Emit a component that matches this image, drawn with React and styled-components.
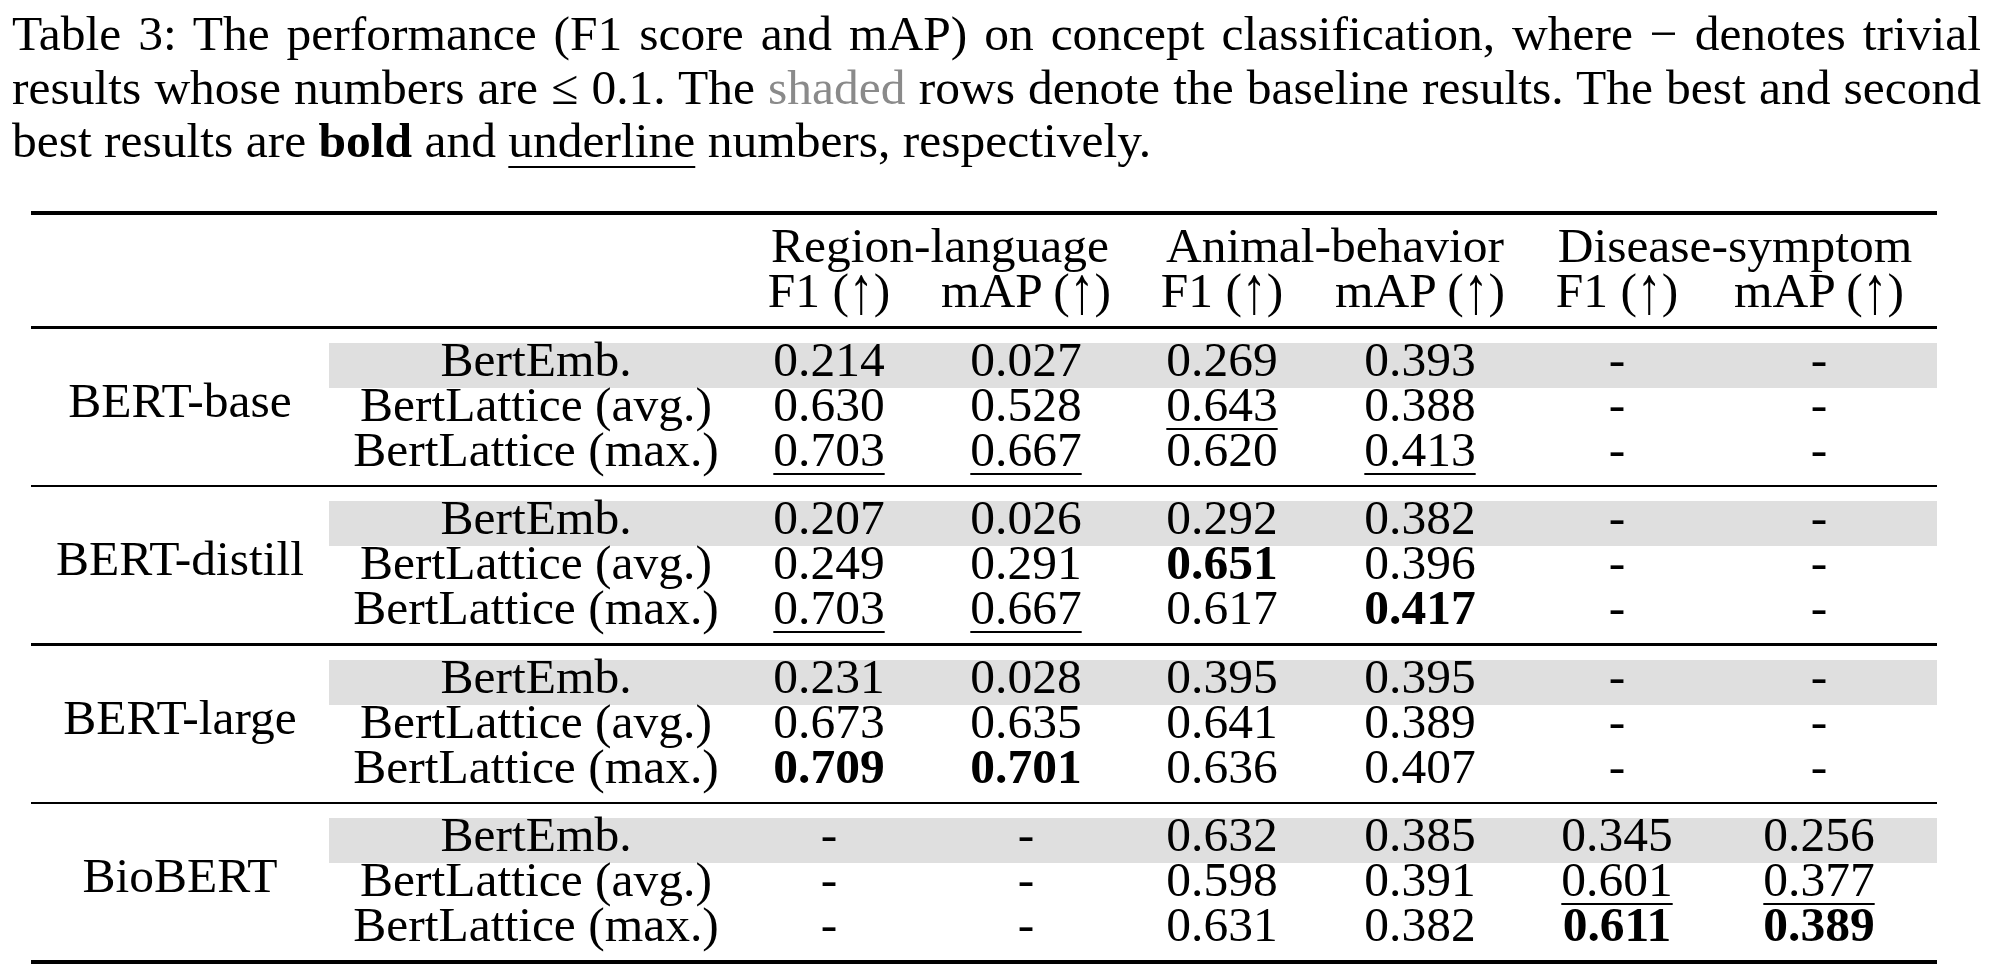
import React from "react";
import styled, { createGlobalStyle } from "styled-components";

const GlobalStyle = createGlobalStyle`
  body {
    margin: 0;
    background: #ffffff;
  }
`;

const COLS = "414px 172px 222px 170px 226px 168px 236px";

const Page = styled.div`
  font-family: "Liberation Serif", "Times New Roman", serif;
  color: #000;
  width: 1996px;
  padding-top: 7px;
`;

const Caption = styled.div`
  margin-left: 12px;
  width: 1969px;
  font-size: 49.5px;
  line-height: 53.5px;
`;

const CaptionLine = styled.div`
  text-align: ${(props) => (props.$last ? "left" : "justify")};
  text-align-last: ${(props) => (props.$last ? "left" : "justify")};
`;

const Shaded = styled.span`
  color: #8a8a8a;
`;

const Strong = styled.b`
  font-weight: 700;
`;

const Underlined = styled.span`
  text-decoration: underline;
  text-decoration-thickness: 2px;
  text-underline-offset: 9px;
`;

const Table = styled.div`
  margin: 43.5px 0 0 31px;
  width: 1906px;
  font-size: 49.5px;
`;

const Rule = styled.div`
  height: ${(props) => props.$weight}px;
  background: #000;
`;

const Header = styled.div`
  padding: 14px 0 7px;
`;

const HeaderRow = styled.div`
  display: grid;
  grid-template-columns: ${(props) => props.$cols};
  height: 45px;
  line-height: 33px;
`;

const Cell = styled.div`
  text-align: center;
  white-space: nowrap;
`;

const Arrow = styled.span`
  display: inline-block;
  transform: scaleY(1.37);
`;

const Group = styled.div`
  display: grid;
  grid-template-columns: 298px 1fr;
  padding: 14px 0 7px;
`;

const GroupLabel = styled.div`
  display: flex;
  align-items: center;
  justify-content: center;
  padding-bottom: 20px;
  line-height: 33px;
  white-space: nowrap;
`;

const DataRow = styled.div`
  display: grid;
  grid-template-columns: ${COLS};
  height: 45px;
  line-height: 33px;
  background: ${(props) => (props.$shaded ? "#dfdfdf" : "transparent")};
`;

const Value = styled.span`
  font-weight: ${(props) => (props.$bold ? 700 : 400)};
  text-decoration: ${(props) => (props.$under ? "underline" : "none")};
  text-decoration-thickness: 2px;
  text-underline-offset: 7px;
`;

const tasks = ["Region-language", "Animal-behavior", "Disease-symptom"];

// b: best (bold), u: second best (underline)
const groups = [
  {
    name: "BERT-base",
    rows: [
      ["BertEmb.", "0.214", "0.027", "0.269", "0.393", "-", "-"],
      ["BertLattice (avg.)", "0.630", "0.528", { u: "0.643" }, "0.388", "-", "-"],
      ["BertLattice (max.)", { u: "0.703" }, { u: "0.667" }, "0.620", { u: "0.413" }, "-", "-"],
    ],
  },
  {
    name: "BERT-distill",
    rows: [
      ["BertEmb.", "0.207", "0.026", "0.292", "0.382", "-", "-"],
      ["BertLattice (avg.)", "0.249", "0.291", { b: "0.651" }, "0.396", "-", "-"],
      ["BertLattice (max.)", { u: "0.703" }, { u: "0.667" }, "0.617", { b: "0.417" }, "-", "-"],
    ],
  },
  {
    name: "BERT-large",
    rows: [
      ["BertEmb.", "0.231", "0.028", "0.395", "0.395", "-", "-"],
      ["BertLattice (avg.)", "0.673", "0.635", "0.641", "0.389", "-", "-"],
      ["BertLattice (max.)", { b: "0.709" }, { b: "0.701" }, "0.636", "0.407", "-", "-"],
    ],
  },
  {
    name: "BioBERT",
    rows: [
      ["BertEmb.", "-", "-", "0.632", "0.385", "0.345", "0.256"],
      ["BertLattice (avg.)", "-", "-", "0.598", "0.391", { u: "0.601" }, { u: "0.377" }],
      ["BertLattice (max.)", "-", "-", "0.631", "0.382", { b: "0.611" }, { b: "0.389" }],
    ],
  },
];

const renderValue = (v) => {
  if (typeof v === "string") return v;
  if (v.b) return <Value $bold>{v.b}</Value>;
  return <Value $under>{v.u}</Value>;
};

const App = () => {
  return (
    <Page>
      <GlobalStyle />
      <Caption>
        <CaptionLine>
          Table 3: The performance (F1 score and mAP) on concept classification, where − denotes trivial
        </CaptionLine>
        <CaptionLine>
          results whose numbers are ≤ 0.1. The <Shaded>shaded</Shaded> rows denote the baseline
          results. The best and second
        </CaptionLine>
        <CaptionLine $last>
          best results are <Strong>bold</Strong> and <Underlined>underline</Underlined> numbers,
          respectively.
        </CaptionLine>
      </Caption>

      <Table>
        <Rule $weight={4} />
        <Header>
          <HeaderRow $cols="712px 394px 396px 404px">
            <Cell />
            {tasks.map((t) => (
              <Cell key={t}>{t}</Cell>
            ))}
          </HeaderRow>
          <HeaderRow $cols="712px 172px 222px 170px 226px 168px 236px">
            <Cell />
            {tasks.map((t) => (
              <React.Fragment key={t}>
                <Cell>
                  F1 (<Arrow>↑</Arrow>)
                </Cell>
                <Cell>
                  mAP (<Arrow>↑</Arrow>)
                </Cell>
              </React.Fragment>
            ))}
          </HeaderRow>
        </Header>
        <Rule $weight={2.5} />

        {groups.map((g, gi) => (
          <React.Fragment key={g.name}>
            <Group>
              <GroupLabel>{g.name}</GroupLabel>
              <div>
                {g.rows.map((row, ri) => (
                  <DataRow key={ri} $shaded={ri === 0}>
                    {row.map((v, ci) => (
                      <Cell key={ci}>{renderValue(v)}</Cell>
                    ))}
                  </DataRow>
                ))}
              </div>
            </Group>
            <Rule $weight={gi === groups.length - 1 ? 4 : 2.5} />
          </React.Fragment>
        ))}
      </Table>
    </Page>
  );
};

export default App;
